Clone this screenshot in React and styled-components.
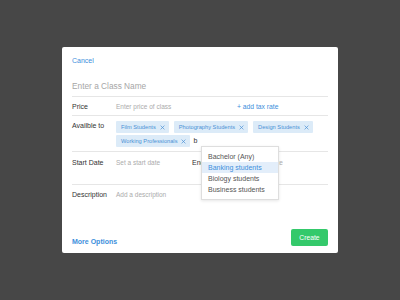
import React from "react";
import styled, { createGlobalStyle } from "styled-components";

const Global = createGlobalStyle`
  html, body { margin: 0; padding: 0; }
  body {
    background: #474747;
    font-family: "Liberation Sans", Arial, sans-serif;
    -webkit-font-smoothing: antialiased;
  }
`;

const Page = styled.div`
  width: 400px;
  height: 300px;
  display: flex;
  align-items: center;
  justify-content: center;
`;

const Card = styled.div`
  position: relative;
  width: 276px;
  height: 206px;
  box-sizing: border-box;
  background: #fff;
  border-radius: 2px;
  padding: 9px 10px 7px;
  display: flex;
  flex-direction: column;
`;

const Link = styled.a`
  color: #3d8fdc;
  font-size: 7px;
  line-height: 9px;
  font-weight: ${(p) => (p.$bold ? 600 : 400)};
  cursor: pointer;
`;

const Header = styled.div`
  height: 9px;
  display: flex;
`;

const NameRow = styled.div`
  margin-top: 15px;
  padding-bottom: 4px;
  border-bottom: 1px solid #e6e6e6;
  font-size: 8.3px;
  line-height: 12px;
  color: #a6a6a6;
`;

const Row = styled.div`
  display: flex;
  align-items: flex-start;
  box-sizing: border-box;
  padding-top: ${(p) => p.$pt || 5}px;
  padding-bottom: 4px;
  border-bottom: ${(p) => (p.$noBorder ? "none" : "1px solid #e6e6e6")};
  ${(p) => (p.$h ? `height: ${p.$h}px;` : "")}
  ${(p) => (p.$grow ? "flex: 1;" : "")}
`;

const Label = styled.div`
  width: ${(p) => p.$w || 44}px;
  flex-shrink: 0;
  font-size: 7px;
  line-height: 9px;
  color: #333;
`;

const Placeholder = styled.div`
  width: ${(p) => (p.$w ? `${p.$w}px` : "auto")};
  flex-shrink: 0;
  font-size: 6.5px;
  line-height: 9px;
  color: #ababab;
`;

const AddLink = styled.div`
  margin-left: ${(p) => p.$ml}px;
  font-size: 6.75px;
  line-height: 9px;
  color: #3d8fdc;
`;

const Tags = styled.div`
  display: flex;
  flex-wrap: wrap;
  align-items: center;
  column-gap: 5px;
  row-gap: 2px;
  width: 212px;
`;

const Tag = styled.div`
  height: 12px;
  box-sizing: border-box;
  display: inline-flex;
  align-items: center;
  gap: 4px;
  padding: 0 4px 0 5px;
  background: #dcebf8;
  color: #4a91d6;
  font-size: 5.7px;
  font-weight: 400;
  border-radius: 1px;
  white-space: nowrap;
`;

const Typed = styled.span`
  font-size: 7px;
  line-height: 12px;
  color: #333;
  margin-left: -2px;
`;

const Footer = styled.div`
  display: flex;
  justify-content: space-between;
  align-items: flex-end;
`;

const CreateButton = styled.button`
  width: 37px;
  height: 17px;
  border: none;
  border-radius: 2px;
  background: #34c96b;
  color: #fff;
  font-family: inherit;
  font-size: 6.75px;
  padding: 0;
`;

const Dropdown = styled.div`
  position: absolute;
  left: 139px;
  top: 99px;
  width: 78px;
  box-sizing: border-box;
  background: #fff;
  border: 1px solid #dedede;
  box-shadow: 0 1px 3px rgba(0, 0, 0, 0.1);
  padding: 4px 0 4px;
`;

const Item = styled.div`
  height: 11px;
  line-height: 11px;
  padding-left: 6px;
  font-size: 7px;
  color: ${(p) => (p.$active ? "#3d8fdc" : "#555")};
  background: ${(p) => (p.$active ? "#e3eefa" : "transparent")};
  white-space: nowrap;
`;

const Close = () => (
  <svg width="5" height="5" viewBox="0 0 5 5">
    <path d="M0.6 0.6 L4.4 4.4 M4.4 0.6 L0.6 4.4" stroke="#4a91d6" strokeWidth="0.7" fill="none" />
  </svg>
);

const tags = ["Film Students", "Photography Students", "Design Students", "Working Professionals"];
const options = ["Bachelor (Any)", "Banking students", "Biology students", "Business students"];

export default function App() {
  return (
    <>
      <Global />
      <Page>
        <Card>
          <Header>
            <Link>Cancel</Link>
          </Header>
          <NameRow>Enter a Class Name</NameRow>
          <Row>
            <Label>Price</Label>
            <Placeholder $w={77}>Enter price of class</Placeholder>
            <AddLink $ml={44}>+ add tax rate</AddLink>
          </Row>
          <Row>
            <Label>Availble to</Label>
            <Tags>
              {tags.map((t) => (
                <Tag key={t}>
                  {t}
                  <Close />
                </Tag>
              ))}
              <Typed>b</Typed>
            </Tags>
          </Row>
          <Row $pt={6} $h={33}>
            <Label>Start Date</Label>
            <Placeholder $w={76}>Set a start date</Placeholder>
            <Label $w={45}>End Date</Label>
            <Placeholder>Set an end date</Placeholder>
          </Row>
          <Row $pt={5} $grow $noBorder>
            <Label>Description</Label>
            <Placeholder>Add a description</Placeholder>
          </Row>
          <Footer>
            <Link $bold>More Options</Link>
            <CreateButton>Create</CreateButton>
          </Footer>
          <Dropdown>
            {options.map((o, i) => (
              <Item key={o} $active={i === 1}>
                {o}
              </Item>
            ))}
          </Dropdown>
        </Card>
      </Page>
    </>
  );
}
